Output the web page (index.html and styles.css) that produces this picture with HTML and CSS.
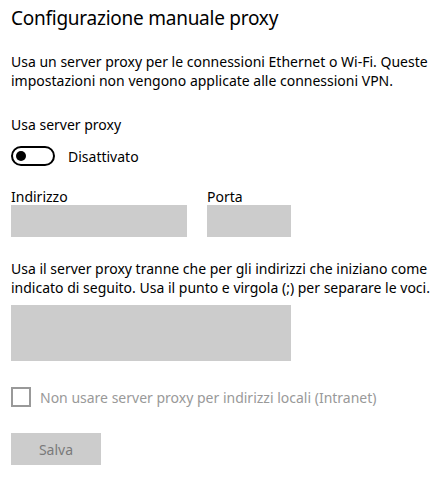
FILE: index.html
```html
<!DOCTYPE html>
<html lang="it">
<head>
<meta charset="utf-8">
<title>Configurazione manuale proxy</title>
<link rel="stylesheet" href="styles.css">
</head>
<body>
<main class="page">
  <h1 class="title">Configurazione manuale proxy</h1>
  <p class="desc">Usa un server proxy per le connessioni Ethernet o Wi-Fi. Queste impostazioni non vengono applicate alle connessioni VPN.</p>
  <div class="label">Usa server proxy</div>
  <div class="toggle-row">
    <span class="toggle"><span class="knob"></span></span>
    <span class="toggle-text">Disattivato</span>
  </div>
  <div class="fields">
    <div class="field">
      <div class="field-label">Indirizzo</div>
      <div class="input input-addr"></div>
    </div>
    <div class="field">
      <div class="field-label">Porta</div>
      <div class="input input-port"></div>
    </div>
  </div>
  <p class="desc desc2">Usa il server proxy tranne che per gli indirizzi che iniziano come indicato di seguito. Usa il punto e virgola (;) per separare le voci.</p>
  <div class="textarea"></div>
  <div class="check-row">
    <span class="checkbox"></span>
    <span class="check-text">Non usare server proxy per indirizzi locali (Intranet)</span>
  </div>
  <div class="button">Salva</div>
</main>
</body>
</html>
```
FILE: styles.css
```css
html, body {
  margin: 0;
  padding: 0;
  background: #ffffff;
}
body {
  font-family: "Noto Sans", "Open Sans", "DejaVu Sans", sans-serif;
  color: #000;
}
.page {
  padding: 0 11px;
  display: flex;
  flex-direction: column;
  align-items: flex-start;
}
.title {
  margin: 4px 0 0 0;
  font-size: 19px;
  font-weight: 400;
  line-height: 28px;
  letter-spacing: -0.25px;
}
.desc {
  margin: 20px 0 0 0;
  font-size: 14px;
  line-height: 19px;
  width: 430px;
}
.label {
  margin-top: 25px;
  font-size: 14px;
  line-height: 19px;
}
.toggle-row {
  margin-top: 12px;
  display: flex;
  align-items: center;
  gap: 13px;
}
.toggle {
  width: 44px;
  height: 20px;
  box-sizing: border-box;
  border: 2px solid #000;
  border-radius: 10px;
  display: flex;
  align-items: center;
  padding-left: 3px;
}
.knob {
  width: 10px;
  height: 10px;
  border-radius: 50%;
  background: #000;
}
.toggle-text {
  font-size: 14px;
  line-height: 19px;
}
.fields {
  margin-top: 22px;
  display: flex;
  gap: 20px;
}
.field-label {
  font-size: 14px;
  line-height: 17px;
}
.input {
  height: 32px;
  background: #cccccc;
}
.input-addr { width: 176px; }
.input-port { width: 84px; }
.desc2 {
  margin-top: 22px;
}
.textarea {
  margin-top: 8px;
  width: 280px;
  height: 56px;
  background: #cccccc;
}
.check-row {
  margin-top: 26px;
  display: flex;
  align-items: center;
  gap: 9px;
}
.checkbox {
  width: 20px;
  height: 20px;
  box-sizing: border-box;
  border: 2px solid #999999;
}
.check-text {
  font-size: 14px;
  line-height: 19px;
  color: #999999;
}
.button {
  margin-top: 26px;
  width: 90px;
  height: 32px;
  background: #cccccc;
  color: #7a7a7a;
  font-size: 14px;
  display: flex;
  align-items: center;
  justify-content: center;
}
```
